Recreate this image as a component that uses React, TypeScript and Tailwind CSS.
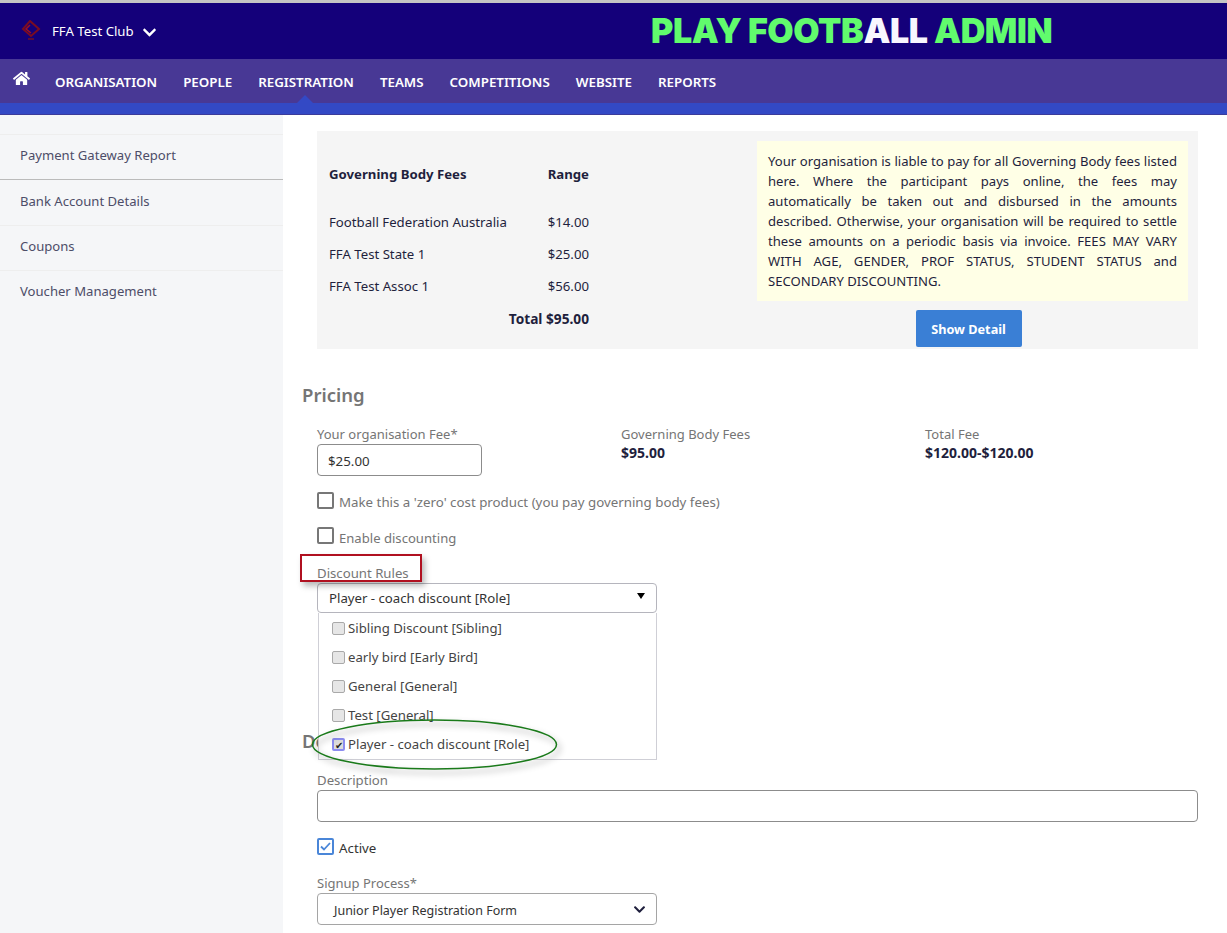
import { FaChevronDown, FaHome } from "react-icons/fa";

const navItems = ["Organisation", "People", "Registration", "Teams", "Competitions", "Website", "Reports"];
const sideItems = ["Payment Gateway Report", "Bank Account Details", "Coupons", "Voucher Management"];
const fees = [
  ["Football Federation Australia", "$14.00"],
  ["FFA Test State 1", "$25.00"],
  ["FFA Test Assoc 1", "$56.00"],
];
const discounts = [
  "Sibling Discount [Sibling]",
  "early bird [Early Bird]",
  "General [General]",
  "Test [General]",
  "Player - coach discount [Role]",
];

const Logo = () => (
  <svg width="20" height="22" viewBox="0 0 20 22" fill="none" className="shrink-0">
    <path d="M9 1 L18 9 L10 16 L2 9 Z" stroke="#7a0c22" strokeWidth="2" />
    <path d="M9 5 L5 9 L10 13" stroke="#a01020" strokeWidth="1.5" />
    <rect x="7" y="18" width="6" height="2" fill="#5a0c3a" />
  </svg>
);

const Box = ({ checked = false }: { checked?: boolean }) => (
  <span
    className={
      checked
        ? "flex h-[17px] w-[17px] shrink-0 items-center justify-center rounded-[2px] border-2 border-[#4a86d8] bg-white"
        : "h-[17px] w-[17px] shrink-0 rounded-[2px] border-2 border-[#777] bg-white"
    }
  >
    {checked && (
      <svg width="11" height="9" viewBox="0 0 11 9" fill="none">
        <path d="M1 4.5 L4 7.5 L10 1" stroke="#4a86d8" strokeWidth="1.8" />
      </svg>
    )}
  </span>
);

const Sidebar = () => (
  <div className="w-[283px] shrink-0 bg-[#f5f6f8] pt-[19px] text-[13.1px] text-[#4d4d68]">
    {sideItems.map((a, idx) => (
      <div
        key={a}
        className={
          idx === 0
            ? "flex h-[46px] items-center border-t border-b border-t-[#eeeeee] border-b-[#bbbbbb] pb-[2px] pl-5"
            : idx === 1
              ? "flex h-[46px] items-center border-b border-[#eeeeee] pb-[2px] pl-5"
              : "flex h-[45px] items-center border-b border-[#eeeeee] pb-[2px] pl-5 last:border-b-0 last:pb-1"
        }
      >
        {a}
      </div>
    ))}
  </div>
);

const FeePanel = () => (
  <div className="ml-[34px] flex h-[218px] w-[881px] bg-[#f5f5f5] text-[13.2px] text-[#1f1f3d]">
    <div className="ml-3 w-[260px] pt-[34px]">
      <div className="flex justify-between font-bold">
        <span>Governing Body Fees</span>
        <span>Range</span>
      </div>
      <div className="mt-[22px] flex flex-col">
        {fees.map(([name, price]) => (
          <div key={name} className="flex h-[32px] items-center justify-between">
            <span>{name}</span>
            <span>{price}</span>
          </div>
        ))}
        <div className="flex h-[32px] items-center justify-end text-[13.7px] font-bold">Total $95.00</div>
      </div>
    </div>
    <div className="ml-[168px] flex w-[431px] flex-col items-center pt-[10px]">
      <div className="h-[160px] w-full bg-[#ffffe6] px-[11px] py-[10px] text-justify text-[13.1px] leading-[20px]">
        Your organisation is liable to pay for all Governing Body fees listed here. Where the participant pays online, the fees may automatically be taken out and disbursed in the amounts described. Otherwise, your organisation will be required to settle these amounts on a periodic basis via invoice. FEES MAY VARY WITH AGE, GENDER, PROF STATUS, STUDENT STATUS and SECONDARY DISCOUNTING.
      </div>
      <button className="mt-[9px] mr-[8px] h-[37px] w-[106px] rounded-[2px] bg-[#3a7fd5] pt-[2px] text-[12.7px] font-bold text-white">
        Show Detail
      </button>
    </div>
  </div>
);

const DiscountMenu = () => (
  <div className="absolute top-[498px] left-[35px] flex h-[147px] w-[339px] flex-col border border-t-0 border-[#cfcfd6] bg-white pt-px text-[13.2px] text-[#444]">
    {discounts.map((d, idx) => (
      <div key={d} className="flex h-[29px] items-center gap-[3px] pl-[13px]">
        <span
          className={
            idx === 4
              ? "flex h-[13px] w-[13px] items-center justify-center rounded-[2px] border-2 border-[#8c8cf0] bg-[#dcdcdc] text-[10px] leading-none text-[#222]"
              : "h-[13px] w-[13px] rounded-[2px] border border-[#a9a9a9] bg-[#e6e6e6]"
          }
        >
          {idx === 4 && "✔"}
        </span>
        <span>{d}</span>
      </div>
    ))}
  </div>
);

const App = () => {
  return (
    <div
      className="flex h-[933px] w-[1227px] flex-col overflow-hidden bg-white"
      style={{ fontFamily: '"Noto Sans", sans-serif' }}
    >
      <div className="h-[3px] bg-[#c4c4c4]" />
      <div className="relative flex h-[56px] items-center bg-[#14007a] pl-[21px] text-white">
        <Logo />
        <span className="mt-[2px] ml-[11px] text-[13.2px]">FFA Test Club</span>
        <FaChevronDown className="mt-[3px] ml-[8px] text-[15px]" />
        <div
          className="absolute top-[8px] left-[651px] text-[34px] leading-[40px] font-black tracking-[-0.4px] text-[#61fb6d]"
          style={{ fontFamily: "Inter, sans-serif" }}
        >
          PLAY FOOTB<span className="text-[#f8f6ff]">ALL</span> ADMIN
        </div>
      </div>
      <div className="relative flex h-[44px] items-center bg-[#483895] pl-[13px] text-[13.33px] font-semibold text-white uppercase">
        <FaHome className="mb-[5px] text-[17px]" />
        <div className="mt-[3px] ml-[25px] flex gap-[26px]">
          {navItems.map((a) => (
            <div key={a} className="cursor-pointer">
              {a}
            </div>
          ))}
        </div>
        <div className="absolute bottom-0 left-[297px] h-0 w-0 border-x-[8px] border-b-[8px] border-x-transparent border-b-[#3349c5]" />
      </div>
      <div className="h-[12px] border-b border-[#3b3b9a] bg-[#3349c5]" />
      <div className="flex min-h-0 flex-1">
        <Sidebar />
        <div className="relative min-w-0 flex-1 pt-4">
          <FeePanel />
          <h2 className="mt-[32px] ml-[19px] text-[18.5px] leading-[28px] font-semibold text-[#757575]">Pricing</h2>
          <div className="mt-[16px] ml-[34px] flex text-[13px] text-[#757575]">
            <div className="w-[304px]">
              <div className="leading-[18px]">Your organisation Fee*</div>
              <input
                readOnly
                value="$25.00"
                className="mt-px h-[32px] w-[165px] rounded-[4px] border border-[#8c8c8c] px-[10px] pt-[2px] text-[13.3px] text-[#333]"
              />
            </div>
            <div className="w-[304px]">
              <div className="leading-[18px]">Governing Body Fees</div>
              <div className="text-[14px] leading-[20px] font-bold text-[#1f1f3d]">$95.00</div>
            </div>
            <div>
              <div className="leading-[18px]">Total Fee</div>
              <div className="text-[14px] leading-[20px] font-bold text-[#1f1f3d]">$120.00-$120.00</div>
            </div>
          </div>
          <label className="mt-[16px] ml-[34px] flex h-[17px] gap-[5px] text-[13.3px] leading-[21px] text-[#757575]">
            <Box />
            Make this a 'zero' cost product (you pay governing body fees)
          </label>
          <label className="mt-[18px] ml-[34px] flex h-[17px] gap-[5px] text-[13.1px] leading-[23px] text-[#757575]">
            <Box />
            Enable discounting
          </label>
          <div className="mt-[20px] ml-[34px] text-[13.2px] leading-[18px] text-[#757575]">Discount Rules</div>
          <div className="mt-px ml-[34px] flex h-[30px] w-[340px] items-center justify-between rounded-[4px] border border-[#b5b5bd] pt-[1px] pr-[11px] pl-[11px] text-[13.2px] text-[#333]">
            Player - coach discount [Role]
            <span className="mb-[5px] h-0 w-0 border-x-[4px] border-t-[6px] border-x-transparent border-t-black" />
          </div>
          <h2 className="mt-[114px] ml-[19px] text-[18.5px] leading-[28px] font-semibold text-[#757575]">Details</h2>
          <div className="mt-[16px] ml-[34px] text-[13.2px] leading-[18px] text-[#757575]">Description</div>
          <input
            readOnly
            className="mt-px ml-[34px] block h-[32px] w-[881px] rounded-[4px] border border-[#8c8c8c]"
          />
          <label className="mt-[16px] ml-[34px] flex h-[17px] gap-[5px] text-[13.3px] leading-[21px] text-[#333]">
            <Box checked />
            Active
          </label>
          <div className="mt-[19px] ml-[34px] text-[13px] leading-[18px] text-[#757575]">Signup Process*</div>
          <div className="mt-px ml-[34px] flex h-[32px] w-[340px] items-center justify-between rounded-[4px] border border-[#a5a5a5] pt-[4px] pr-[10px] pl-4 text-[12.5px] text-[#333]">
            Junior Player Registration Form
            <FaChevronDown className="mb-[3px] text-[13px] text-[#1f1f3d]" />
          </div>

          <DiscountMenu />

          {/* hand drawn callouts sitting over the form */}
          <div className="absolute top-[439px] left-[17px] h-[28px] w-[122px] border-2 border-[#b01020] shadow-[3px_4px_6px_rgba(0,0,0,0.28)]" />
          <svg
            className="absolute top-[604px] left-[28px] overflow-visible drop-shadow-[3px_4px_3px_rgba(0,0,0,0.4)]"
            width="252"
            height="56"
            viewBox="0 0 252 56"
            fill="none"
          >
            <ellipse cx="123.5" cy="25.5" rx="122" ry="24.5" stroke="#1a7a1a" strokeWidth="1.5" />
          </svg>
        </div>
      </div>
    </div>
  );
};

export default App;
